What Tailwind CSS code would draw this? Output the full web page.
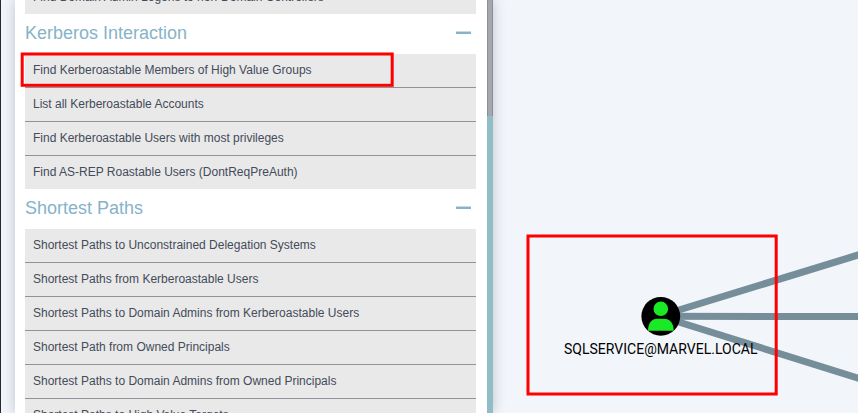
<!DOCTYPE html>
<html lang="en">
<head>
<meta charset="utf-8">
<title>BloodHound</title>
<script src="https://cdn.jsdelivr.net/npm/@tailwindcss/browser@4"></script>
</head>
<body class="relative flex h-[413px] w-[858px] overflow-hidden border-l border-[#252936] bg-[#f2f5fa] font-['Liberation_Sans',Arial,sans-serif] text-[12px] leading-[17px] text-[#444b59]">
  <aside class="ml-[14px] flex h-[413px] w-[478px] shrink-0 bg-white shadow-[0_0_12px_rgba(60,65,80,0.28)]">
    <div class="ml-[10px] h-[413px] w-[451px] overflow-hidden">
      <div class="flex h-[14px] items-end bg-[#e9e9e9] px-2 pb-[8px]"><span>Find Domain Admin Logons to non-Domain Controllers</span></div>
      <div class="flex h-10 items-center justify-between pr-[5px] text-[18px] leading-[20px] text-[#86b3c9]">
        <h2 class="pb-[2px]">Kerberos Interaction</h2>
        <span class="mb-[3px] h-[3px] w-[15px] border-t border-[#c6dce6] bg-[#86b3c9]"></span>
      </div>
      <ul class="divide-y divide-[#929399] bg-[#e9e9e9]">
        <li class="h-[34px] px-2 pt-[8px]">Find Kerberoastable Members of High Value Groups</li>
        <li class="h-[34px] px-2 pt-[8px]">List all Kerberoastable Accounts</li>
        <li class="h-[34px] px-2 pt-[8px]">Find Kerberoastable Users with most privileges</li>
        <li class="h-[33px] px-2 pt-[8px]">Find AS-REP Roastable Users (DontReqPreAuth)</li>
      </ul>
      <div class="flex h-10 items-center justify-between pr-[5px] text-[18px] leading-[20px] text-[#86b3c9]">
        <h2 class="pb-[2px]">Shortest Paths</h2>
        <span class="mb-[3px] h-[3px] w-[15px] border-t border-[#c6dce6] bg-[#86b3c9]"></span>
      </div>
      <ul class="divide-y divide-[#929399] bg-[#e9e9e9]">
        <li class="h-[34px] px-2 pt-[8px]">Shortest Paths to Unconstrained Delegation Systems</li>
        <li class="h-[34px] px-2 pt-[8px]">Shortest Paths from Kerberoastable Users</li>
        <li class="h-[34px] px-2 pt-[8px]">Shortest Paths to Domain Admins from Kerberoastable Users</li>
        <li class="h-[34px] px-2 pt-[8px]">Shortest Path from Owned Principals</li>
        <li class="h-[34px] px-2 pt-[8px]">Shortest Paths to Domain Admins from Owned Principals</li>
        <li class="h-[34px] px-2 pt-[8px]">Shortest Paths to High Value Targets</li>
      </ul>
    </div>
    <div class="ml-auto h-[413px] w-[6px] bg-[#90bec4]">
      <div class="h-[116px] border-x border-[#8b8e94] bg-[#a4a8ae]"></div>
    </div>
  </aside>

  <!-- Graph canvas and highlight frames -->
  <svg class="pointer-events-none absolute top-0 -left-px h-[413px] w-[858px]" viewBox="0 0 858 413">
    <g stroke="#758e99" stroke-width="7">
      <path d="M661 315.5 L862 253.8"/>
      <path d="M661 316.3 L862 316.6"/>
      <path d="M661 316.5 L862 379.3"/>
    </g>
    <circle cx="660.8" cy="316.3" r="19.4" fill="#000"/>
    <g fill="#1aea26">
      <circle cx="660.8" cy="308.8" r="7.3"/>
      <path d="M648 330.8 C648 323 652 318.8 657 318.8 H664.5 C669.5 318.8 673.7 323 673.7 330.8 Z"/>
    </g>
    <text x="564" y="354" font-family="Roboto, sans-serif" font-size="14" textLength="193.5" lengthAdjust="spacingAndGlyphs" fill="#000">SQLSERVICE@MARVEL.LOCAL</text>
    <g fill="none" stroke="#f00" stroke-width="3">
      <rect x="22.2" y="54" width="370" height="31.3"/>
      <rect x="528" y="236" width="248.2" height="158"/>
    </g>
  </svg>
</body>
</html>
